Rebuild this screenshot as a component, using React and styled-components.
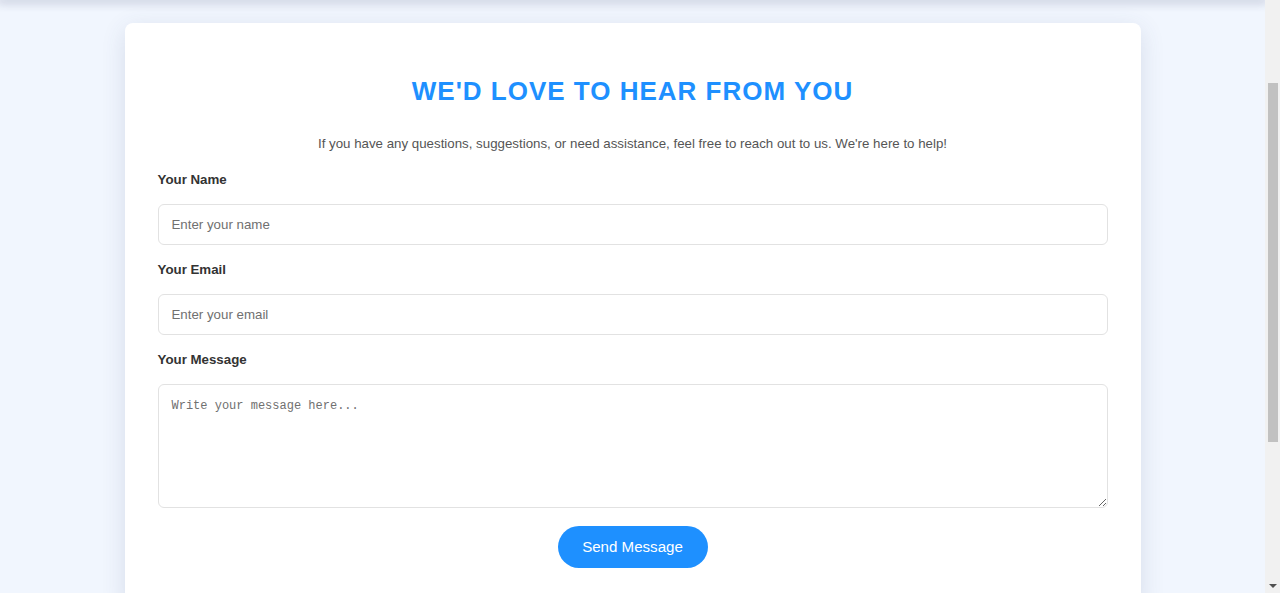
import React from "react";
import styled, { createGlobalStyle } from "styled-components";

const GlobalStyle = createGlobalStyle`
  html, body {
    margin: 0;
    padding: 0;
    background: #f1f6fe;
    font-family: "Liberation Sans", Arial, sans-serif;
    overflow: hidden;
  }
  * { box-sizing: border-box; }
`;

const Shell = styled.div`
  display: flex;
  height: 100vh;
`;

const Main = styled.main`
  flex: 1;
  min-width: 0;
  height: 100vh;
  overflow: hidden;
  background: #f1f6fe;
`;

const TopShadow = styled.div`
  height: 0;
  box-shadow: 0 0 10px 3px rgba(40, 50, 90, 0.24);
`;

const Scrollbar = styled.div`
  width: 15px;
  height: 100vh;
  background: #f1f1f1;
  display: flex;
  flex-direction: column;
  align-items: center;
  padding-top: 83px;
`;

const Thumb = styled.div`
  width: 10px;
  height: 359px;
  background: #c1c1c1;
`;

const TrackRest = styled.div`
  flex: 1;
`;

const Arrow = styled.div`
  width: 0;
  height: 0;
  margin-bottom: 5px;
  border-left: 4px solid transparent;
  border-right: 4px solid transparent;
  border-top: 4px solid #505050;
`;

const Card = styled.section`
  width: 1016px;
  margin: 23px auto 40px;
  background: #ffffff;
  border-radius: 8px;
  box-shadow: 0 6px 24px rgba(60, 70, 110, 0.14);
  padding: 33px 33px 40px;
`;

const Title = styled.h2`
  margin: 20px 0 0;
  text-align: center;
  color: #1e90ff;
  font-size: 26px;
  line-height: 30px;
  font-weight: 700;
  letter-spacing: 1px;
`;

const Subtitle = styled.p`
  margin: 30px 0 0;
  text-align: center;
  color: #555555;
  font-size: 13.3px;
  line-height: 16px;
`;

const Form = styled.form`
  margin-top: 20px;
  display: flex;
  flex-direction: column;
`;

const Field = styled.div`
  display: flex;
  flex-direction: column;
  gap: 16px;
  margin-bottom: 17px;
`;

const Label = styled.label`
  font-size: 13.3px;
  line-height: 16px;
  font-weight: 700;
  color: #333333;
`;

const Input = styled.input`
  width: 100%;
  height: 41px;
  padding: 0 13px;
  border: 1px solid #e2e2e2;
  border-radius: 6px;
  font-family: "Liberation Sans", Arial, sans-serif;
  font-size: 13.3px;
  color: #333;
  outline: none;
  &::placeholder { color: #707070; }
`;

const TextArea = styled.textarea`
  width: 100%;
  height: 124px;
  padding: 14px 13px 12px;
  border: 1px solid #e2e2e2;
  border-radius: 6px;
  font-family: "Liberation Mono", monospace;
  font-size: 12px;
  line-height: 15px;
  color: #333;
  outline: none;
  resize: vertical;
  &::placeholder { color: #707070; }
`;

const ButtonRow = styled.div`
  display: flex;
  justify-content: center;
  margin-top: 1px;
`;

const SendButton = styled.button`
  height: 42px;
  width: 150px;
  padding: 0 0 1px;
  border: none;
  border-radius: 21px;
  background: #1e90ff;
  color: #ffffff;
  font-family: "Liberation Sans", Arial, sans-serif;
  font-size: 15.1px;
  cursor: pointer;
`;

export default function App() {
  return (
    <>
      <GlobalStyle />
      <Shell>
        <Main>
          <TopShadow />
          <Card>
            <Title>WE'D LOVE TO HEAR FROM YOU</Title>
            <Subtitle>
              If you have any questions, suggestions, or need assistance, feel free to reach out to us. We're here to help!
            </Subtitle>
            <Form onSubmit={(e) => e.preventDefault()}>
              <Field>
                <Label htmlFor="name">Your Name</Label>
                <Input id="name" type="text" placeholder="Enter your name" />
              </Field>
              <Field>
                <Label htmlFor="email">Your Email</Label>
                <Input id="email" type="email" placeholder="Enter your email" />
              </Field>
              <Field>
                <Label htmlFor="message">Your Message</Label>
                <TextArea id="message" placeholder="Write your message here..." />
              </Field>
              <ButtonRow>
                <SendButton type="submit">Send Message</SendButton>
              </ButtonRow>
            </Form>
          </Card>
        </Main>
        <Scrollbar aria-hidden="true">
          <Thumb />
          <TrackRest />
          <Arrow />
        </Scrollbar>
      </Shell>
    </>
  );
}
